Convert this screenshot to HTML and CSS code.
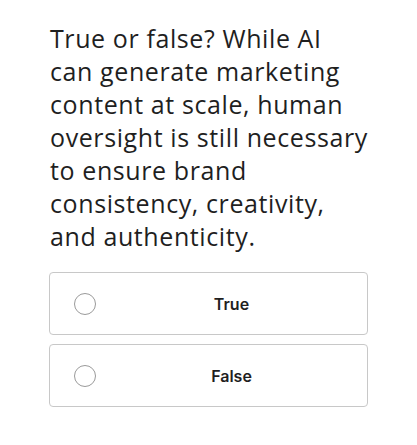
FILE: index.html
```html
<!DOCTYPE html>
<html lang="en">
<head>
<meta charset="utf-8">
<title>Quiz</title>
<link rel="stylesheet" href="styles.css">
</head>
<body>
<main class="quiz">
  <h1 class="question">True or false? While AI can generate marketing content at scale, human oversight is still necessary to ensure brand consistency, creativity, and authenticity.</h1>
  <div class="options">
    <label class="option">
      <span class="radio"></span>
      <span class="option-label">True</span>
    </label>
    <label class="option">
      <span class="radio"></span>
      <span class="option-label">False</span>
    </label>
  </div>
</main>
</body>
</html>
```
FILE: styles.css
```css
html, body {
  margin: 0;
  padding: 0;
  background: #ffffff;
}

.quiz {
  width: 319px;
  padding: 22px 0 0 49px;
}

.question {
  margin: 0;
  font-family: "Open Sans", sans-serif;
  font-weight: 400;
  font-size: 25px;
  letter-spacing: 0.6px;
  line-height: 33px;
  color: #1f1f1f;
  padding-left: 1px;
}

.options {
  display: flex;
  flex-direction: column;
  gap: 9px;
  margin-top: 19px;
}

.option {
  display: flex;
  align-items: center;
  height: 61px;
  padding-left: 24px;
  border: 1px solid #c8c8c8;
  border-radius: 4px;
  cursor: pointer;
}

.radio {
  width: 20px;
  height: 20px;
  border: 1px solid #9a9a9a;
  border-radius: 50%;
  flex: none;
}

.option-label {
  flex: 1;
  text-align: center;
  font-family: "Inter", sans-serif;
  font-weight: 600;
  font-size: 16px;
  color: #1f1f1f;
}
```
